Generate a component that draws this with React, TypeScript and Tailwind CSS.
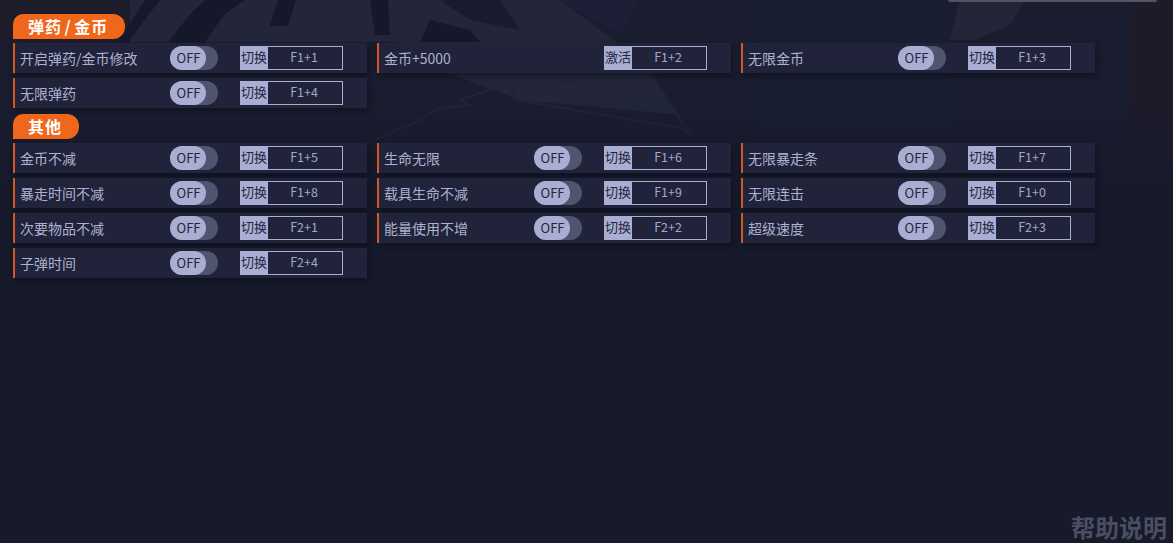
const cjk = { fontFamily: '"Noto Sans CJK SC", "Noto Sans", sans-serif' };

type Item = { label: string; keys: string; action?: string; noToggle?: boolean };

const ammo: Item[] = [
  { label: "开启弹药/金币修改", keys: "F1+1" },
  { label: "金币+5000", keys: "F1+2", action: "激活", noToggle: true },
  { label: "无限金币", keys: "F1+3" },
  { label: "无限弹药", keys: "F1+4" },
];

const other: Item[] = [
  { label: "金币不减", keys: "F1+5" },
  { label: "生命无限", keys: "F1+6" },
  { label: "无限暴走条", keys: "F1+7" },
  { label: "暴走时间不减", keys: "F1+8" },
  { label: "载具生命不减", keys: "F1+9" },
  { label: "无限连击", keys: "F1+0" },
  { label: "次要物品不减", keys: "F2+1" },
  { label: "能量使用不增", keys: "F2+2" },
  { label: "超级速度", keys: "F2+3" },
  { label: "子弹时间", keys: "F2+4" },
];

function Toggle() {
  return (
    <div className="h-6 w-12 rounded-full bg-[#50546f]">
      <div className="flex h-6 w-9 items-center justify-center rounded-full bg-[#a9aed2] pl-[1px] text-[13px] text-[#23263c]">
        OFF
      </div>
    </div>
  );
}

function Row({ item }: { item: Item }) {
  return (
    <div className="flex h-[30px] w-[354px] items-center border-l-[2px] border-[#d2591f] bg-[#20233a] pl-[5px] shadow-[2px_3px_5px_rgba(8,10,20,0.5)]">
      <div className="w-[150px] text-[14px] text-[#aeb2cf]">{item.label}</div>
      <div className="w-[70px] shrink-0">{!item.noToggle && <Toggle />}</div>
      <div className="flex h-6 w-[103px] shrink-0">
        <div className="flex h-6 w-[27px] items-center justify-center bg-[#a9aed2] pb-[2px] pl-[1px] text-[13px] whitespace-nowrap text-[#23263c]">
          {item.action ?? "切换"}
        </div>
        <div className="flex h-6 flex-1 items-center justify-center border border-[#a9aed2] pr-[2px] pb-[1px] text-[12.5px] text-[#a3a7c8]">
          {item.keys}
        </div>
      </div>
    </div>
  );
}

function Section({ title, width, items }: { title: React.ReactNode; width: string; items: Item[] }) {
  return (
    <div>
      <div
        className={`flex h-[25px] items-center rounded-tl-[10px] rounded-tr-[12px] rounded-br-[12px] bg-[#f0661a] pb-[1px] pl-[15px] text-[16px] font-bold tracking-[1px] text-white ${width}`}
      >
        {title}
      </div>
      <div className="mt-[4px] grid w-[1082px] grid-cols-[354px_354px_354px] gap-x-[10px] gap-y-[5px]">
        {items.map((item) => (
          <Row key={item.label} item={item} />
        ))}
      </div>
    </div>
  );
}

export default function App() {
  return (
    <div className="relative h-[543px] w-[1173px] overflow-hidden bg-[#161a2b]" style={cjk}>
      {/* faded game artwork behind the top of the list */}
      <svg className="absolute top-0 left-0" width="1173" height="200" viewBox="0 0 1173 200">
        <defs>
          <linearGradient id="fade" x1="0" y1="0" x2="0" y2="1">
            <stop offset="0" stopColor="#fff" />
            <stop offset="0.5" stopColor="#fff" />
            <stop offset="1" stopColor="#000" />
          </linearGradient>
          <mask id="m">
            <rect width="1173" height="200" fill="url(#fade)" />
          </mask>
        </defs>
        <g mask="url(#m)">
          <rect width="1173" height="200" fill="#1a1d2f" />
          <rect width="130" height="42" fill="#1f1c2a" />
          <path d="M130 0L560 0 640 60 680 115 520 100 440 70 395 42 130 42Z" fill="#23263a" />
          <path d="M160 0L128 42 118 42 145 0Z" fill="#15182a" />
          <path d="M205 0L245 0 225 14 205 42 168 42 190 14Z" fill="#15182a" />
          <path d="M278 0L296 0 288 26 270 26Z" fill="#15182a" />
          <path d="M370 0L388 0 390 35 375 35Z" fill="#15182a" />
          <path d="M430 20L470 30 480 42 420 42Z" fill="#15182a" />
          <path d="M440 0L500 0 520 30 470 20Z" fill="#181b2e" />
          <path d="M560 0L640 0 620 35Z" fill="#1c1f36" />
          <path d="M550 78L630 75 640 100Z" fill="#22253a" />
          <path
            d="M375 140L410 125 440 108 470 105 460 100 510 82 515 100 680 128 690 135 650 72"
            fill="none"
            stroke="#212438"
            strokeWidth="2.5"
          />
          <path d="M760 0L950 0 950 130 760 130Z" fill="#1a1e33" />
          <path d="M960 0L1025 0 1010 25 975 40 950 40Z" fill="#25253a" />
          <rect x="1130" width="43" height="150" fill="#1d1b2a" />
        </g>
      </svg>
      <div className="absolute top-0 right-[16px] h-[2px] w-[209px] rounded-b bg-[#55555d]" />

      <div className="relative flex flex-col gap-[6px] pt-[14px] pl-[13px]">
        <Section
          title={
            <>
              弹药<span className="mx-[2.5px]">/</span>金币
            </>
          }
          width="w-[112px]"
          items={ammo}
        />
        <Section title="其他" width="w-[66px]" items={other} />
      </div>

      <div className="absolute right-[6px] bottom-0 h-[32px] text-[24px] leading-[32px] font-bold text-[#4b4e60]">帮助说明</div>
    </div>
  );
}
